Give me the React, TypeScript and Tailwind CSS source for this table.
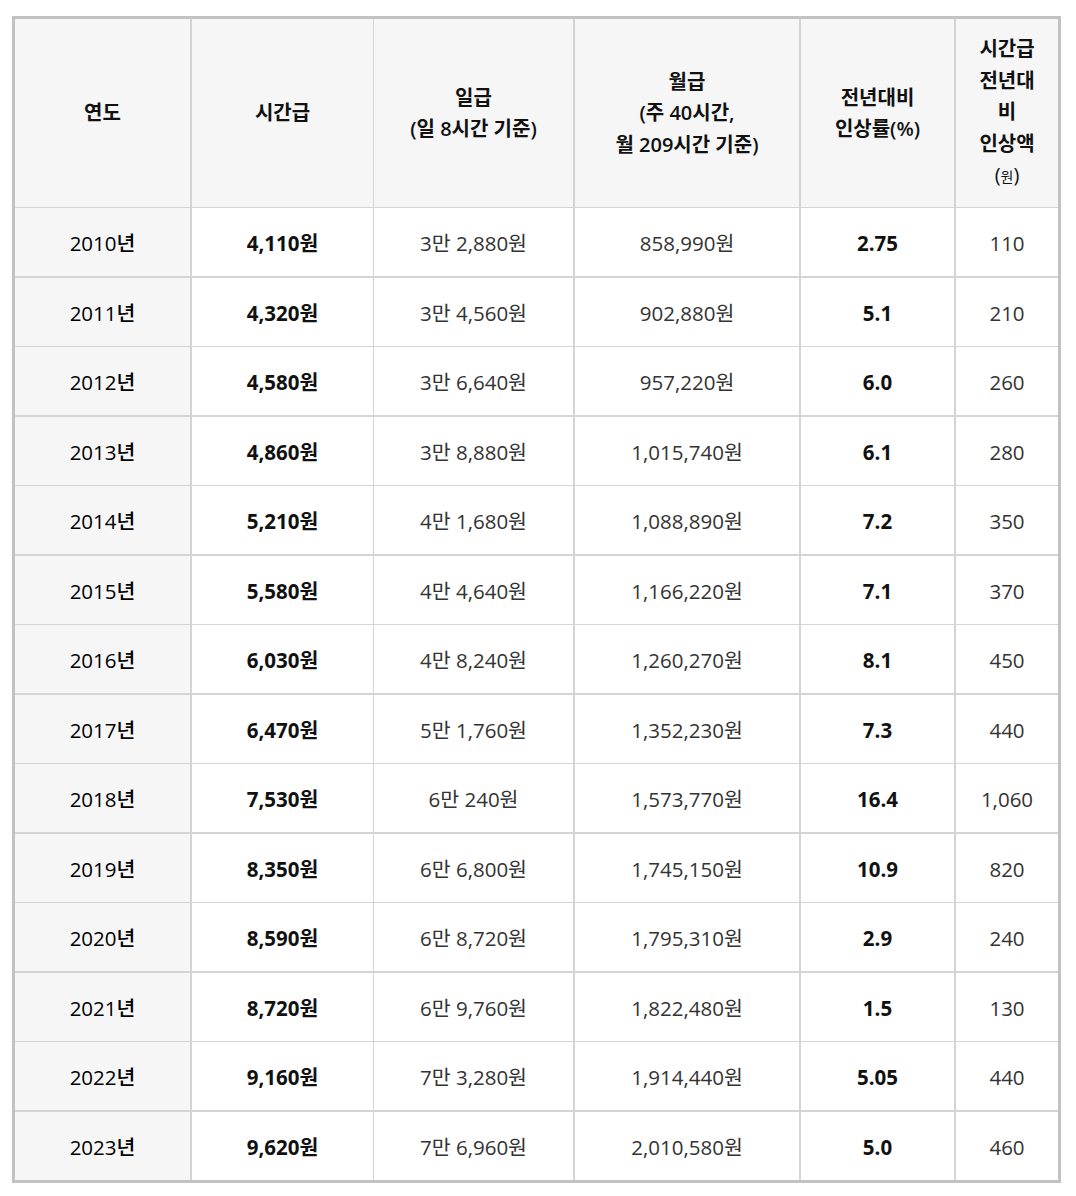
import React from "react";

const rows: [string, string, string, string, string, string][] = [
  ["2010년", "4,110원", "3만 2,880원", "858,990원", "2.75", "110"],
  ["2011년", "4,320원", "3만 4,560원", "902,880원", "5.1", "210"],
  ["2012년", "4,580원", "3만 6,640원", "957,220원", "6.0", "260"],
  ["2013년", "4,860원", "3만 8,880원", "1,015,740원", "6.1", "280"],
  ["2014년", "5,210원", "4만 1,680원", "1,088,890원", "7.2", "350"],
  ["2015년", "5,580원", "4만 4,640원", "1,166,220원", "7.1", "370"],
  ["2016년", "6,030원", "4만 8,240원", "1,260,270원", "8.1", "450"],
  ["2017년", "6,470원", "5만 1,760원", "1,352,230원", "7.3", "440"],
  ["2018년", "7,530원", "6만 240원", "1,573,770원", "16.4", "1,060"],
  ["2019년", "8,350원", "6만 6,800원", "1,745,150원", "10.9", "820"],
  ["2020년", "8,590원", "6만 8,720원", "1,795,310원", "2.9", "240"],
  ["2021년", "8,720원", "6만 9,760원", "1,822,480원", "1.5", "130"],
  ["2022년", "9,160원", "7만 3,280원", "1,914,440원", "5.05", "440"],
  ["2023년", "9,620원", "7만 6,960원", "2,010,580원", "5.0", "460"],
];

const colBorder = [
  "border-r-2",
  "border-r",
  "border-r-2",
  "border-r-2",
  "border-r-2",
  "",
];

const cellText = [
  "font-medium text-[#000]",
  "font-bold text-[#111]",
  "font-normal text-[#333]",
  "font-normal text-[#333]",
  "font-bold text-[#111]",
  "font-normal text-[#333]",
];

export default function App() {
  return (
    <div
      className="min-h-[1196px] bg-white pt-[16px] pl-[12px]"
      style={{ fontFamily: '"Open Sans", "Noto Sans CJK KR", sans-serif' }}
    >
      <div className="w-[1049px] border-[3px] border-[#c2c2c2]">
        <div className="grid grid-cols-[177px_182px_201px_226px_155px_102px] text-[20.5px]">
          {[
            ["연도"],
            ["시간급"],
            ["일급", "(일 8시간 기준)"],
            ["월급", "(주 40시간,", "월 209시간 기준)"],
            ["전년대비", "인상률(%)"],
          ].map((lines, i) => (
            <div
              key={i}
              className={`flex h-[189px] flex-col items-center justify-center border-b border-[#d4d4d4] bg-[#f6f6f6] text-[20px] leading-[31.5px] font-semibold text-[#111] ${colBorder[i]}`}
            >
              {lines.map((l, j) => (
                <span key={j} className="whitespace-nowrap">
                  {l}
                </span>
              ))}
            </div>
          ))}
          <div className="flex h-[189px] flex-col items-center justify-center border-b border-[#d4d4d4] bg-[#f6f6f6] text-[20px] leading-[31.5px] font-semibold text-[#111]">
            <span>시간급</span>
            <span>전년대</span>
            <span>비</span>
            <span>인상액</span>
            <span className="font-normal">
              (<span className="text-[14px]">원</span>)
            </span>
          </div>

          {rows.map((r, ri) => {
            const last = ri === rows.length - 1;
            const h = last
              ? "h-[68px]"
              : ri % 2 === 0
              ? "h-[70px] border-b-2"
              : "h-[69px] border-b";
            return r.map((v, ci) => (
              <div
                key={`${ri}-${ci}`}
                className={`flex items-center justify-center border-[#d4d4d4] pt-[3px] ${h} ${colBorder[ci]} ${
                  ci === 0 ? "bg-[#f6f6f6]" : "bg-white"
                } ${cellText[ci]}`}
              >
                <span className="whitespace-nowrap">{v}</span>
              </div>
            ));
          })}
        </div>
      </div>
    </div>
  );
}
